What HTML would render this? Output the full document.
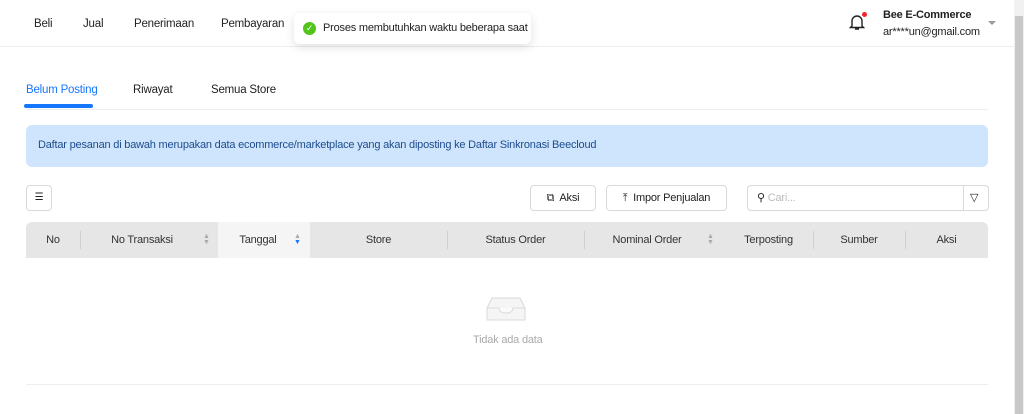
<!DOCTYPE html><html><head><style>
body{margin:0;width:1024px;height:414px;overflow:hidden;background:#fff;font-family:"Liberation Sans",sans-serif;font-size:11.5px;letter-spacing:-0.2px;color:#222;position:relative}
.a{position:absolute;white-space:nowrap}
.sb{position:absolute;right:0;top:0;width:10px;height:414px;background:#f1f1f1}
.sb div{position:absolute;left:1px;top:16px;width:8px;height:398px;background:#c8c8c8}
.th{position:absolute;top:222px;height:36px;line-height:36px;text-align:center;color:#333;font-size:11px}
.sep{position:absolute;top:231px;width:1px;height:18px;background:#d0d0d0}
.btn{position:absolute;border:1px solid #d9d9d9;border-radius:4px;background:#fff;height:24px;top:185px;line-height:24px;font-size:11px;white-space:nowrap}
</style></head><body>
<div class="a" style="left:0;top:46px;width:1014px;height:1px;background:#eee"></div>
<div class="a" style="left:34px;top:18px">Beli</div>
<div class="a" style="left:83px;top:18px">Jual</div>
<div class="a" style="left:134px;top:18px">Penerimaan</div>
<div class="a" style="left:221px;top:18px">Pembayaran</div>
<div class="a" style="left:294px;top:13px;width:237px;height:31px;background:#fff;border-radius:6px;box-shadow:0 3px 10px rgba(0,0,0,.12)">
<div class="a" style="left:9px;top:9px;width:13px;height:13px;border-radius:50%;background:#52c41a;color:#fff;font-size:9px;line-height:13px;text-align:center">✓</div>
<div class="a" style="left:29px;top:9px;font-size:11px">Proses membutuhkan waktu beberapa saat</div></div>
<svg class="a" style="left:849px;top:13px" width="16" height="18" viewBox="0 0 16 18"><path d="M3 13V8a5 5 0 0 1 10 0v5l1.5 1.5h-13z M6 16h4" fill="none" stroke="#222" stroke-width="1.4"/></svg>
<div class="a" style="left:862px;top:12px;width:5px;height:5px;border-radius:50%;background:#f5222d"></div>
<div class="a" style="left:883px;top:9px;font-weight:bold;font-size:11px">Bee E-Commerce</div>
<div class="a" style="left:883px;top:26px;font-size:11px">ar****un@gmail.com</div>
<div class="a" style="left:988px;top:21px;border:4px solid transparent;border-top:4px solid #999"></div>
<div class="a" style="left:26px;top:84px;color:#1677ff">Belum Posting</div>
<div class="a" style="left:133px;top:84px">Riwayat</div>
<div class="a" style="left:211px;top:84px">Semua Store</div>
<div class="a" style="left:26px;top:109px;width:962px;height:1px;background:#eee"></div>
<div class="a" style="left:24px;top:104px;width:69px;height:4px;border-radius:2px;background:#1677ff"></div>
<div class="a" style="left:26px;top:125px;width:962px;height:42px;background:#cfe5fd;border-radius:6px"><div class="a" style="left:12px;top:14px;color:#1d4c8c;font-size:11px">Daftar pesanan di bawah merupakan data ecommerce/marketplace yang akan diposting ke Daftar Sinkronasi Beecloud</div></div>
<div class="btn" style="left:26px;width:24px;text-align:center;font-size:10px">☰</div>
<div class="btn" style="left:530px;width:64px;text-align:center">⧉&nbsp; Aksi</div>
<div class="btn" style="left:606px;width:119px;text-align:center">⤒&nbsp; Impor Penjualan</div>
<div class="btn" style="left:747px;width:240px"><span style="margin-left:9px">⚲</span> <span style="color:#bbb">Cari...</span><div class="a" style="left:215px;top:0;width:1px;height:24px;background:#d9d9d9"></div><div class="a" style="left:222px;top:0">▽</div></div>
<div class="a" style="left:26px;top:222px;width:962px;height:36px;background:#e6e6e6;border-radius:6px 6px 0 0"></div>
<div class="a" style="left:218px;top:222px;width:92px;height:36px;background:#f5f5f5"></div>
<div class="th" style="left:26px;width:54px">No</div>
<div class="th" style="left:80px;width:124px">No Transaksi</div>
<div class="th" style="left:218px;width:80px">Tanggal</div>
<div class="th" style="left:310px;width:137px">Store</div>
<div class="th" style="left:447px;width:137px">Status Order</div>
<div class="th" style="left:584px;width:126px">Nominal Order</div>
<div class="th" style="left:724px;width:89px">Terposting</div>
<div class="th" style="left:813px;width:92px">Sumber</div>
<div class="th" style="left:905px;width:83px">Aksi</div>
<div class="a" style="left:203px;top:234px;font-size:7px;color:#aaa;line-height:6px">▲<br>▼</div>
<div class="a" style="left:294px;top:234px;font-size:7px;color:#aaa;line-height:6px">▲<br><span style="color:#1677ff">▼</span></div>
<div class="a" style="left:707px;top:234px;font-size:7px;color:#aaa;line-height:6px">▲<br>▼</div>
<div class="sep" style="left:80px"></div><div class="sep" style="left:447px"></div><div class="sep" style="left:584px"></div><div class="sep" style="left:813px"></div><div class="sep" style="left:905px"></div>
<svg class="a" style="left:486px;top:294px" width="40" height="28" viewBox="0 0 40 28"><path d="M6 4h28l5 10v12H1V14z" fill="#f5f5f5" stroke="#d9d9d9"/><path d="M1 14h12q0 5 7 5t7-5h12" fill="#fafafa" stroke="#d9d9d9"/></svg>
<div class="a" style="left:473px;top:334px;color:#aaa;font-size:11px">Tidak ada data</div>
<div class="a" style="left:26px;top:384px;width:962px;height:1px;background:#eee"></div>
<div class="sb"><div></div></div>
</body></html>
